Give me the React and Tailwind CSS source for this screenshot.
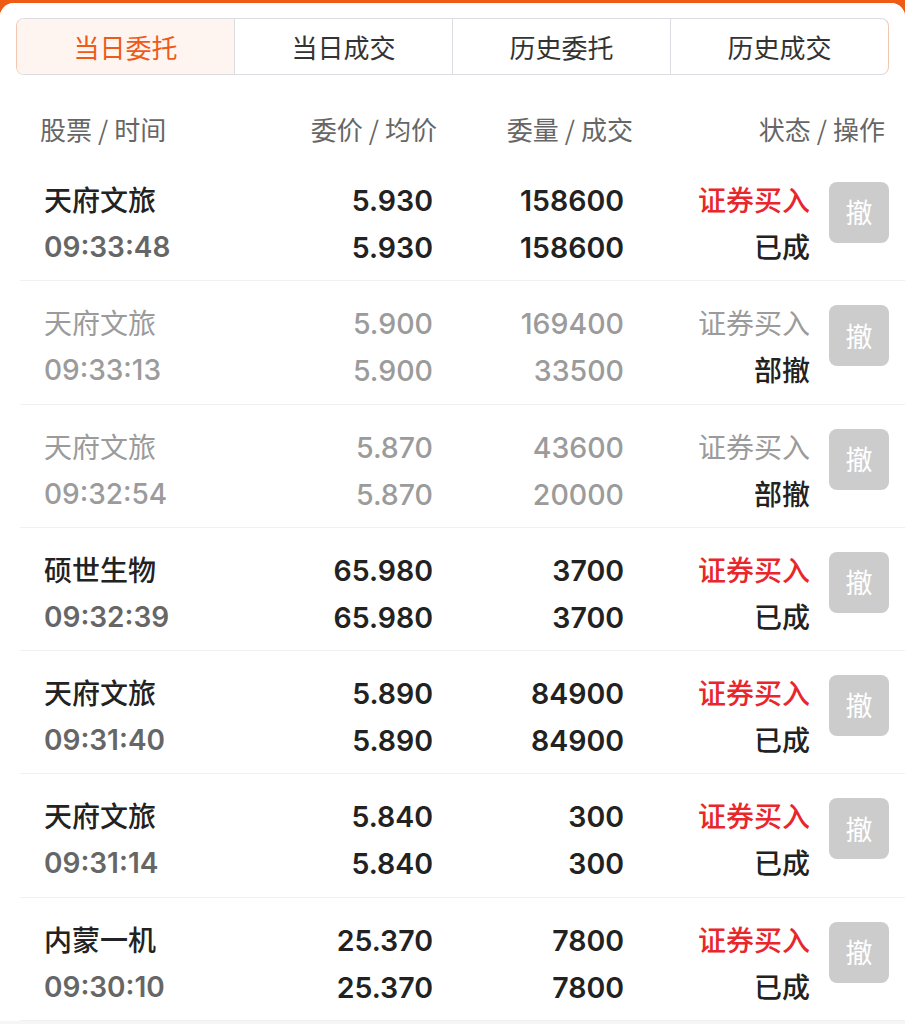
const tabs = ['当日委托', '当日成交', '历史委托', '历史成交'];

const orders = [
  { name: '天府文旅', time: '09:33:48', price: '5.930', avg: '5.930', qty: '158600', done: '158600', status: '已成', active: true },
  { name: '天府文旅', time: '09:33:13', price: '5.900', avg: '5.900', qty: '169400', done: '33500', status: '部撤', active: false },
  { name: '天府文旅', time: '09:32:54', price: '5.870', avg: '5.870', qty: '43600', done: '20000', status: '部撤', active: false },
  { name: '硕世生物', time: '09:32:39', price: '65.980', avg: '65.980', qty: '3700', done: '3700', status: '已成', active: true },
  { name: '天府文旅', time: '09:31:40', price: '5.890', avg: '5.890', qty: '84900', done: '84900', status: '已成', active: true },
  { name: '天府文旅', time: '09:31:14', price: '5.840', avg: '5.840', qty: '300', done: '300', status: '已成', active: true },
  { name: '内蒙一机', time: '09:30:10', price: '25.370', avg: '25.370', qty: '7800', done: '7800', status: '已成', active: true },
];

const num = { fontFamily: 'Inter, "Noto Sans CJK SC", sans-serif' };

function Head({ a, b }) {
  return (
    <>
      {a}
      <span className="mx-[6px]">/</span>
      {b}
    </>
  );
}

function OrderRow({ o }) {
  const main = o.active ? 'text-[#222222] font-semibold' : 'text-[#9b9b9b] font-medium';
  const sub = o.active ? 'text-[#666666] font-semibold' : 'text-[#9b9b9b] font-medium';
  return (
    <div className="ml-[20px] h-[123.3px] border-b border-[#f0f0f0] flex items-start pl-[24px]">
      <div className="w-[206px] pt-[18px] leading-[47px]">
        <div className={o.active ? 'text-[#222222] font-medium' : 'text-[#9b9b9b]'}>{o.name}</div>
        <div className={`text-[28px] pt-[1px] ${sub}`} style={num}>{o.time}</div>
      </div>
      <div className={`w-[183px] pt-[19px] leading-[47px] text-[28.5px] text-right ${main}`} style={num}>
        <div>{o.price}</div>
        <div>{o.avg}</div>
      </div>
      <div className={`w-[191px] pt-[19px] leading-[47px] text-[28.5px] text-right ${main}`} style={num}>
        <div>{o.qty}</div>
        <div>{o.done}</div>
      </div>
      <div className="w-[186px] pt-[18px] leading-[47px] text-right">
        <div className={o.active ? 'text-[#e8262b] font-medium' : 'text-[#9b9b9b]'}>证券买入</div>
        <div className="text-[#222222] font-medium">{o.status}</div>
      </div>
      <button className="ml-[19px] mt-[24px] w-[60px] h-[61px] rounded-[8px] bg-[#cccccc] text-white text-[27px] flex items-center justify-center">
        撤
      </button>
    </div>
  );
}

export default function App() {
  return (
    <div
      className="w-[905px] h-[1024px] overflow-hidden bg-[#ef5a14] pt-[3px]"
      style={{ fontFamily: '"Noto Sans CJK SC", "Noto Sans", sans-serif' }}
    >
      <div className="h-full bg-[#f5f6f7] rounded-t-[14px] overflow-hidden">
        <div className="bg-white pt-[15px]">
          <div className="mx-[16px] h-[57px] flex border border-[#dcdce3] border-x-[#f2c7b0] rounded-[8px] overflow-hidden">
            {tabs.map((t, i) => (
              <div
                key={t}
                className={`flex-1 flex items-center justify-center text-[26px] ${
                  i === 0 ? 'bg-[#fff5f0] text-[#ee5a1a]' : 'text-[#333333] border-l border-[#dcdce3]'
                }`}
              >
                {t}
              </div>
            ))}
          </div>

          <div className="h-[83px] pt-[23px] flex items-center text-[26px] text-[#666666]">
            <div className="pl-[40px] w-[265px]"><Head a="股票" b="时间" /></div>
            <div className="w-[172px] text-right"><Head a="委价" b="均价" /></div>
            <div className="w-[196px] text-right"><Head a="委量" b="成交" /></div>
            <div className="w-[252px] text-right"><Head a="状态" b="操作" /></div>
          </div>

          <div className="text-[28px]">
            {orders.map((o, i) => (
              <OrderRow key={i} o={o} />
            ))}
          </div>
        </div>
      </div>
    </div>
  );
}
